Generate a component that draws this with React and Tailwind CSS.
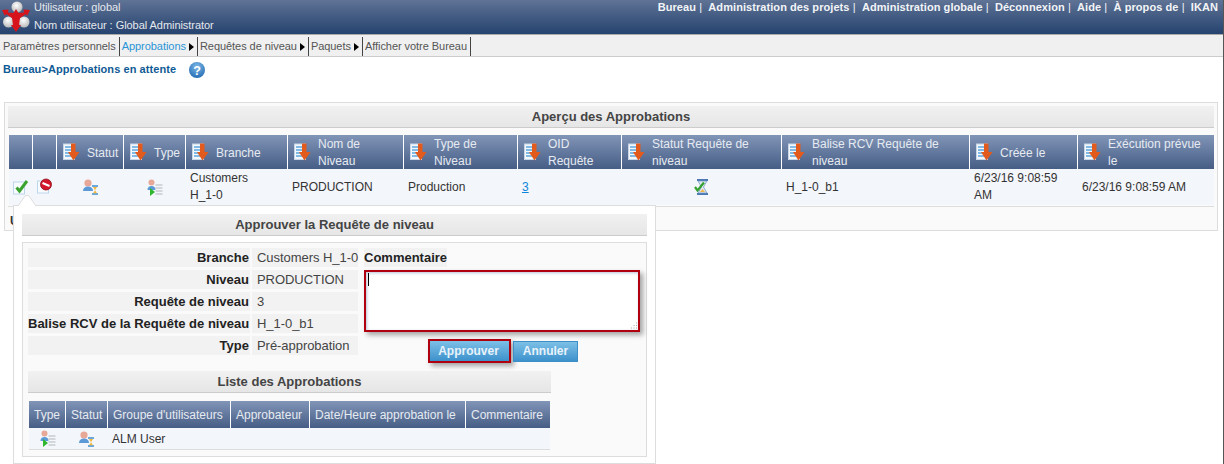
import React from 'react';

const topLinks = ['Bureau', 'Administration des projets', 'Administration globale', 'Déconnexion', 'Aide', 'À propos de', 'IKAN'];

const columns = [
  { w: 'w-[24px]' },
  { w: 'w-[24px]' },
  { w: 'w-[67px]', label: 'Statut' },
  { w: 'w-[62px]', label: 'Type' },
  { w: 'w-[102px]', label: 'Branche' },
  { w: 'w-[116px]', label: 'Nom de\nNiveau' },
  { w: 'w-[114px]', label: 'Type de\nNiveau' },
  { w: 'w-[104px]', label: 'OID\nRequête' },
  { w: 'w-[160px]', label: 'Statut Requête de\nniveau' },
  { w: 'w-[188px]', label: 'Balise RCV Requête de\nniveau' },
  { w: 'w-[108px]', label: 'Créée le' },
  { w: 'w-[136px]', label: 'Exécution prévue\nle' },
];

const formRows = [
  ['Branche', 'Customers H_1-0'],
  ['Niveau', 'PRODUCTION'],
  ['Requête de niveau', '3'],
  ['Balise RCV de la Requête de niveau', 'H_1-0_b1'],
  ['Type', 'Pré-approbation'],
];

function Logo() {
  return (
    <svg width="32" height="33" viewBox="0 0 32 33" className="shrink-0">
      <defs>
        <radialGradient id="ball" cx="45%" cy="35%" r="70%">
          <stop offset="0" stopColor="#ffffff" />
          <stop offset="1" stopColor="#b4b4b4" />
        </radialGradient>
      </defs>
      <circle cx="15" cy="7" r="5.5" fill="url(#ball)" />
      <circle cx="6.5" cy="22" r="5.5" fill="url(#ball)" />
      <circle cx="22" cy="22" r="5.5" fill="url(#ball)" />
      <path d="M14 9 L16.500 13 L22 12.500 L21.500 9.500 L28 10 L25 16 L24 14 L18 18 L17 25 L19 25 L14 32 L9 25 L11 25 L10 18 L4 14 L3 16 L0 10 L6.500 9.500 L6 12.500 L11.500 13 Z" fill="#d7141c" />
    </svg>
  );
}

function SortIcon() {
  return (
    <svg width="17" height="18" viewBox="0 0 17 18" className="shrink-0">
      <rect x="0.5" y="1" width="11" height="15.5" fill="#f4f8fc" stroke="#c6d6e6" />
      <path d="M2 4h8M2 7h8M2 10h8M2 13h8" stroke="#5aa5dd" strokeWidth="1.6" />
      <path d="M8 0.5h4.500v8.500h4L10.500 17.500 5 9h3z" fill="#e25a1c" />
    </svg>
  );
}

function WaitUserIcon() {
  return (
    <svg width="16" height="16" viewBox="0 0 16 16">
      <circle cx="5" cy="4" r="3.600" fill="#e8a898" />
      <path d="M0 12c0-3 2-4.500 5-4.500s5 1.500 5 4.500z" fill="#5b9ad6" />
      <path d="M9 7h6M9 15h6" stroke="#3f8fd0" strokeWidth="1.400" />
      <path d="M10 8h4l-2 3.200 2 3h-4l2-3z" fill="#f0b840" />
    </svg>
  );
}

function TypeIcon() {
  return (
    <svg width="16" height="17" viewBox="0 0 16 17">
      <circle cx="4.500" cy="3.500" r="3" fill="#e8a898" />
      <path d="M0.500 11c0-2.500 1.500-4 4-4s4 1.500 4 4z" fill="#5b9ad6" />
      <path d="M8.500 6h7M8.500 9h7M8.500 12h7M8.500 15h7" stroke="#b4b8bc" strokeWidth="1.200" />
      <path d="M3 9l5 4-5 4z" fill="#2eb82e" />
    </svg>
  );
}

function RequestStatusIcon() {
  return (
    <svg width="16" height="16" viewBox="0 0 16 16">
      <path d="M3 1h11M3 15h11" stroke="#4a78b5" strokeWidth="1.800" />
      <path d="M4 2h9l-3.500 6 3.500 6H4l3.500-6z" fill="#dfe8f0" stroke="#6a90bd" strokeWidth="0.700" />
      <path d="M6 13l2.500-3 2.500 3z" fill="#eeb44a" />
      <path d="M1 8l2.500 3.500L10 3.500" fill="none" stroke="#35a12e" strokeWidth="2.200" />
    </svg>
  );
}

function ApproveIcon() {
  return (
    <svg width="16" height="16" viewBox="0 0 16 16">
      <rect x="0.500" y="3" width="11" height="12" fill="#f8fbfe" stroke="#bcd6ea" />
      <path d="M3.500 8.500l3 3.500 7.500-10" fill="none" stroke="#3aa22e" strokeWidth="3" />
    </svg>
  );
}

function RejectIcon() {
  return (
    <svg width="16" height="16" viewBox="0 0 16 16">
      <rect x="0.500" y="3" width="11" height="12" fill="#f8fbfe" stroke="#bcd6ea" />
      <circle cx="9" cy="6.500" r="5.500" fill="#d3162b" stroke="#8c0f1c" strokeWidth="0.800" />
      <path d="M5.500 5l7 3" stroke="#ffffff" strokeWidth="2" />
    </svg>
  );
}

function HelpIcon() {
  return (
    <svg width="16" height="16" viewBox="0 0 16 16">
      <defs>
        <radialGradient id="help" cx="50%" cy="30%" r="75%">
          <stop offset="0" stopColor="#7fb9e8" />
          <stop offset="1" stopColor="#1f68b0" />
        </radialGradient>
      </defs>
      <circle cx="8" cy="8" r="8" fill="url(#help)" />
      <text x="8" y="12.500" textAnchor="middle" fontSize="12.500" fontWeight="700" fill="#ffffff" fontFamily="Liberation Sans">?</text>
    </svg>
  );
}

function ResizeGrip() {
  return (
    <svg width="8" height="8" viewBox="0 0 8 8" className="absolute bottom-[2px] right-[2px]">
      <path d="M6 1h1M3.500 3.500h1M6 3.500h1M1 6h1M3.500 6h1M6 6h1" stroke="#aaa" />
    </svg>
  );
}

function NavItem({ label, arrow, active, first, last }) {
  return (
    <div className={`flex h-[19px] items-center border-r border-[#444] tracking-[-0.05px] ${first ? 'pl-[3px] pr-[3px]' : 'pl-[2px]'} ${last ? 'pr-[3px]' : 'pr-[2px]'}`}>
      <span className={active ? 'text-[#2a94d6]' : 'text-[#555]'}>{label}</span>
      {arrow && <span className="ml-[3px] mr-[1px] h-0 w-0 border-y-[4px] border-l-[5px] border-y-transparent border-l-black" />}
    </div>
  );
}

function TitleBar({ children, className }) {
  return (
    <div className={`flex items-center justify-center border-b border-[#ccc] bg-gradient-to-b from-[#f1f1f1] to-[#e6e6e6] text-[13px] font-bold text-[#444] ${className}`}>
      {children}
    </div>
  );
}

export default function App() {
  return (
    <div className="relative h-[464px] w-[1224px] overflow-hidden border-r border-[#555] bg-white text-[12px] text-[#333] [font-family:'Liberation_Sans',Arial,sans-serif]">
      {/* top bar */}
      <div className="flex h-[35px] justify-between border-b border-[#aaa] bg-gradient-to-b from-[#5f7395] to-[#26436f] pl-[2px] pr-[5px] text-[11px] text-[#e4e8ee]">
        <div className="flex">
          <Logo />
          <div className="-mt-[2px] leading-[18px] tracking-[-0.05px]">
            <div>Utilisateur : global</div>
            <div>Nom utilisateur : Global Administrator</div>
          </div>
        </div>
        <div className="flex font-bold leading-[14px] tracking-[0.07px] text-[#f2f4f7]">
          {topLinks.map((link, i) => (
            <span key={link} className="whitespace-pre">
              {link}
              {i < topLinks.length - 1 && <span className="font-normal">{' | '}&nbsp;</span>}
            </span>
          ))}
        </div>
      </div>

      {/* sub nav */}
      <div className="flex h-[22px] items-start border-b border-[#ccc] bg-[#f0f0f0] pt-[2px] text-[11px]">
        <NavItem label="Paramètres personnels" first />
        <NavItem label="Approbations" arrow active />
        <NavItem label="Requêtes de niveau" arrow />
        <NavItem label="Paquets" arrow />
        <NavItem label="Afficher votre Bureau" last />
      </div>

      {/* breadcrumb */}
      <div className="flex h-[45px] items-start pl-[3px] pt-[5px] text-[11px] font-bold text-[#0f5a94]">
        <span className="leading-[14px] tracking-[0.08px]">Bureau&gt;Approbations en attente</span>
        <span className="ml-[13px]"><HelpIcon /></span>
      </div>

      {/* main panel */}
      <div className="relative ml-[4px] h-[129px] w-[1214px] border border-[#ddd] bg-[#fafafa] p-[3px]">
        <TitleBar className="h-[22px]">Aperçu des Approbations</TitleBar>
        <table className="ml-[1px] mt-[7px] w-[1205px] table-fixed border-separate border-spacing-0">
          <colgroup>
            {columns.map((c, i) => <col key={i} className={c.w} />)}
          </colgroup>
          <thead>
            <tr className="h-[34px] bg-gradient-to-b from-[#8195b7] to-[#465d85] text-left text-[#e6ebf2]">
              {columns.map((c, i) => (
                <th key={i} className="border-r border-white p-0 font-normal last:border-r-0">
                  {c.label && (
                    <div className="flex items-center pl-[6px]">
                      <SortIcon />
                      <span className="ml-[7px] translate-y-[1px] whitespace-pre-line leading-[17px]">{c.label}</span>
                    </div>
                  )}
                </th>
              ))}
            </tr>
          </thead>
          <tbody>
            <tr className="h-[36px] bg-[#f3f6fb]">
              <td className="p-0 pl-[4px]"><ApproveIcon /></td>
              <td className="p-0 pl-[4px]"><div className="-mt-[3px]"><RejectIcon /></div></td>
              <td className="p-0"><div className="flex justify-center"><WaitUserIcon /></div></td>
              <td className="p-0"><div className="flex justify-center"><TypeIcon /></div></td>
              <td className="whitespace-pre-line px-[4px] py-0 leading-[17px]">{'Customers\nH_1-0'}</td>
              <td className="px-[4px] py-0">PRODUCTION</td>
              <td className="px-[4px] py-0">Production</td>
              <td className="px-[4px] py-0"><a href="#" className="text-[#0b87da] underline">3</a></td>
              <td className="p-0"><div className="flex justify-center"><RequestStatusIcon /></div></td>
              <td className="px-[4px] py-0">H_1-0_b1</td>
              <td className="px-[4px] py-0 leading-[17px]">6/23/16 9:08:59 AM</td>
              <td className="px-[4px] py-0">6/23/16 9:08:59 AM</td>
            </tr>
          </tbody>
        </table>
        <div className="mt-[1px] border-t border-[#ddd] pl-[2px] pt-[5px] font-bold">U</div>

        {/* approve popup, hangs off the approve icon */}
        <div className="absolute left-[8px] top-[102px] z-10 h-[259px] w-[643px] border border-[#ddd] bg-white pl-[8px] pr-[8px] pt-[8px]">
          <svg width="18" height="11" viewBox="0 0 18 11" className="absolute left-[4px] top-[-11px]">
            <path d="M0 11 L7 1 Q9 -0.500 11 1 L18 11 Z" fill="#ffffff" />
            <path d="M0 11 L7 1 Q9 -0.500 11 1 L18 11" fill="none" stroke="#ddd" />
          </svg>
          <TitleBar className="h-[22px] w-[625px]">Approuver la Requête de niveau</TitleBar>
          <div className="mt-[6px] h-[215px] w-[625px] border border-[#ddd] bg-[#fafafa] pl-[5px] pt-[5px]">
            <div className="flex">
              <div className="flex w-[330px] flex-col gap-[3px]">
                {formRows.map(([label, value]) => (
                  <div key={label} className="flex h-[19px] gap-[2px] leading-[19px]">
                    <div className="w-[222px] whitespace-nowrap bg-[#f2f2f2] pr-[1px] text-right text-[13px] font-bold text-[#222]">{label}</div>
                    <div className="w-[106px] whitespace-nowrap bg-[#f2f2f2] pl-[5px] text-[13px] tracking-[-0.05px] text-[#444]">{value}</div>
                  </div>
                ))}
              </div>
              <div className="ml-[6px] flex w-[276px] flex-col items-start">
                <div className="h-[19px] bg-[#f2f2f2] text-[13px] font-bold leading-[19px] text-[#222]">Commentaire</div>
                <div className="relative mt-[3px] h-[62px] w-[276px]">
                  <textarea className="block h-full w-full resize-none border-2 border-[#b00010] bg-white shadow-[3px_3px_5px_rgba(0,0,0,0.35),inset_1px_1px_3px_rgba(60,80,140,0.35)] outline-none" />
                  <div className="absolute left-[4px] top-[3px] h-[13px] w-[1px] bg-black" />
                  <ResizeGrip />
                </div>
                <div className="ml-[64px] mt-[7px] flex items-center gap-[2px] text-[12px] font-bold text-[#e8f3fb]">
                  <button className="h-[24px] w-[83px] border-2 border-[#b00010] bg-gradient-to-b from-[#7cc0e6] to-[#3c91cc] pr-[2px] shadow-[3px_3px_5px_rgba(0,0,0,0.35)]">Approuver</button>
                  <button className="h-[21px] w-[65px] border border-[#3d8fc8] bg-gradient-to-b from-[#7cc0e6] to-[#3c91cc]">Annuler</button>
                </div>
              </div>
            </div>
            <TitleBar className="mt-[8px] h-[22px] w-[523px]">Liste des Approbations</TitleBar>
            <table className="ml-[1px] mt-[8px] w-[521px] table-fixed border-separate border-spacing-0">
              <colgroup>
                <col className="w-[37px]" />
                <col className="w-[42px]" />
                <col className="w-[123px]" />
                <col className="w-[79px]" />
                <col className="w-[156px]" />
                <col className="w-[84px]" />
              </colgroup>
              <thead>
                <tr className="h-[27px] bg-gradient-to-b from-[#8195b7] to-[#465d85] text-left text-[#e6ebf2]">
                  {['Type', 'Statut', "Groupe d'utilisateurs", 'Approbateur', 'Date/Heure approbation le', 'Commentaire'].map((h) => (
                    <th key={h} className="whitespace-nowrap border-r border-white p-0 pl-[5px] font-normal last:border-r-0">{h}</th>
                  ))}
                </tr>
              </thead>
              <tbody>
                <tr className="h-[22px] bg-[#f3f6fb]">
                  <td className="border-b border-[#ddd] p-0"><div className="flex justify-center"><TypeIcon /></div></td>
                  <td className="border-b border-[#ddd] p-0"><div className="flex justify-center"><WaitUserIcon /></div></td>
                  <td className="border-b border-[#ddd] px-[4px] py-0">ALM User</td>
                  <td className="border-b border-[#ddd]" />
                  <td className="border-b border-[#ddd]" />
                  <td className="border-b border-[#ddd]" />
                </tr>
              </tbody>
            </table>
          </div>
        </div>
      </div>
    </div>
  );
}
